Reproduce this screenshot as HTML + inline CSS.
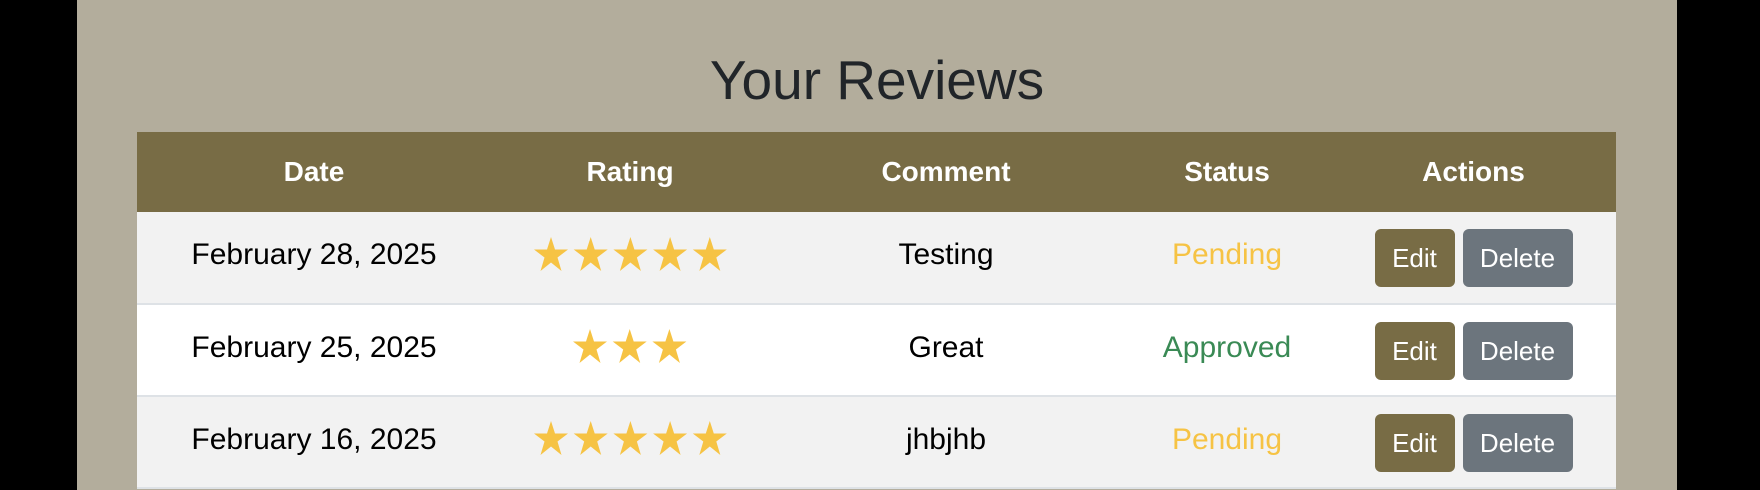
<!DOCTYPE html>
<html><head><style>
body{margin:0;width:1760px;height:490px;background:#000;overflow:hidden;font-family:"Liberation Sans",sans-serif;}
.main{position:absolute;left:77px;top:0;width:1600px;height:490px;background:#b3ad9c;}
h1{position:absolute;left:0;width:1600px;top:48px;margin:0;text-align:center;font-weight:400;font-size:55px;color:#212529;}
table{position:absolute;left:60px;top:132px;width:1479px;border-collapse:collapse;table-layout:fixed;}
th{background:#786c45;color:#fff;font-weight:bold;font-size:28px;height:80px;text-align:center;padding:0;}
td{height:92px;border-bottom:2px solid #dee2e6;text-align:center;font-size:30px;color:#000;padding:0 0 5px 0;box-sizing:border-box}
tr.o td{background:#f2f2f2}tr.e td{background:#fff}
.p{color:#f6c344}.a{color:#3a8a55}
.b{display:inline-block;color:#fff;font-size:26px;height:58px;line-height:58px;border-radius:6px;vertical-align:middle;position:relative;top:3px}
.ed{background:#786c45;width:80px}.de{background:#6c757d;width:110px;margin-left:8px}
svg{vertical-align:middle;position:relative;top:-2px}
</style></head><body>
<div class="main">
<h1>Your Reviews</h1>
<table>
<colgroup><col style="width:354px"><col style="width:278px"><col style="width:354px"><col style="width:208px"><col style="width:285px"></colgroup>
<tr><th>Date</th><th>Rating</th><th>Comment</th><th>Status</th><th>Actions</th></tr>
<tr class="o"><td>February 28, 2025</td><td><svg width="193" height="34" viewBox="0 0 193 34"><g fill="#f6c344"><path id="s" d="M17 0 L21 12.5 L34 12.5 L23.5 20.5 L27.5 34 L17 25.5 L6.5 34 L10.5 20.5 L0 12.5 L13 12.5Z"/><use href="#s" x="39.7"/><use href="#s" x="79.4"/><use href="#s" x="119.1"/><use href="#s" x="158.8"/></g></svg></td><td>Testing</td><td class="p">Pending</td><td><span class="b ed">Edit</span><span class="b de">Delete</span></td></tr>
<tr class="e"><td>February 25, 2025</td><td><svg width="114" height="34" viewBox="0 0 114 34"><g fill="#f6c344"><use href="#s"/><use href="#s" x="39.7"/><use href="#s" x="79.4"/></g></svg></td><td>Great</td><td class="a">Approved</td><td><span class="b ed">Edit</span><span class="b de">Delete</span></td></tr>
<tr class="o"><td>February 16, 2025</td><td><svg width="193" height="34" viewBox="0 0 193 34"><g fill="#f6c344"><use href="#s"/><use href="#s" x="39.7"/><use href="#s" x="79.4"/><use href="#s" x="119.1"/><use href="#s" x="158.8"/></g></svg></td><td>jhbjhb</td><td class="p">Pending</td><td><span class="b ed">Edit</span><span class="b de">Delete</span></td></tr>
</table>
</div>
</body></html>
